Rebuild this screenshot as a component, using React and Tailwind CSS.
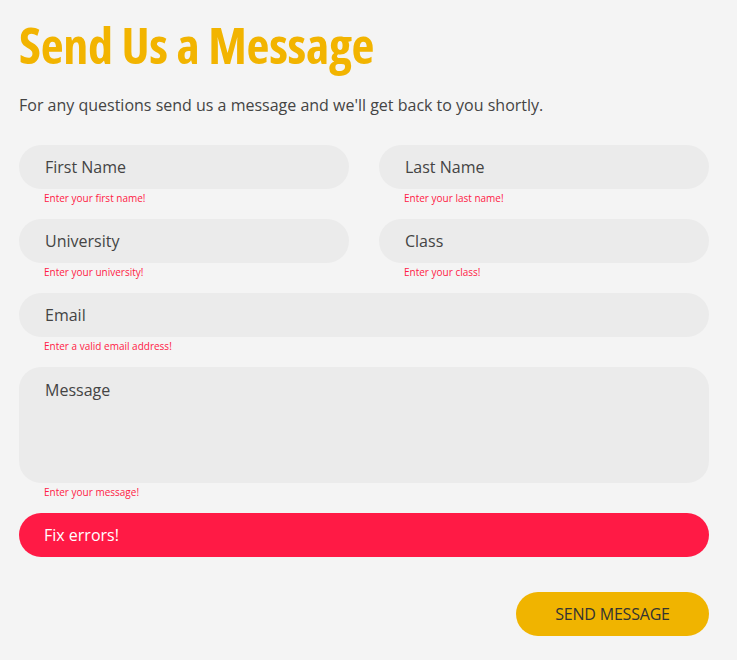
export default function App() {
    const inputCls = "w-full h-[44px] rounded-full bg-[#ebebeb] pl-[26px] text-[16px] text-[#444] placeholder:text-[#444] outline-none"
    const errCls = "pl-[25px] pt-[3px] h-[30px] text-[10px] leading-[13px] text-[#ff1a45]"

    return (
        <div className="min-h-screen bg-[#f4f4f4] px-[19px] pt-[15px] pb-[24px]" style={{ fontFamily: '"Open Sans", sans-serif' }}>
            <div className="w-[690px]">
                <h1 className="text-[50px] leading-[60px] font-bold text-[#f2b400] tracking-[-0.25px]" style={{ fontStretch: '75%' }}>
                    Send Us a Message
                </h1>
                <p className="mt-[19px] text-[16px] leading-[22px] text-[#444]">
                    For any questions send us a message and we'll get back to you shortly.
                </p>

                <form className="mt-[29px]">
                    <div className="grid grid-cols-2 gap-x-[30px]">
                        <div>
                            <input className={inputCls} placeholder="First Name" />
                            <div className={errCls}>Enter your first name!</div>
                        </div>
                        <div>
                            <input className={inputCls} placeholder="Last Name" />
                            <div className={errCls}>Enter your last name!</div>
                        </div>
                        <div>
                            <input className={inputCls} placeholder="University" />
                            <div className={errCls}>Enter your university!</div>
                        </div>
                        <div>
                            <input className={inputCls} placeholder="Class" />
                            <div className={errCls}>Enter your class!</div>
                        </div>
                    </div>
                    <div>
                        <input className={inputCls} placeholder="Email" />
                        <div className={errCls}>Enter a valid email address!</div>
                    </div>
                    <div>
                        <textarea className="block w-full h-[116px] resize-none rounded-[22px] bg-[#ebebeb] pl-[26px] pt-[11px] text-[16px] text-[#444] placeholder:text-[#444] outline-none" placeholder="Message" />
                        <div className={errCls}>Enter your message!</div>
                    </div>
                    <div className="h-[44px] rounded-full bg-[#ff1a45] pl-[25px] flex items-center text-[16px] text-white">
                        Fix errors!
                    </div>
                    <div className="mt-[35px] flex justify-end">
                        <button type="button" className="w-[193px] h-[44px] rounded-full bg-[#f0b400] text-[16px] text-[#333] uppercase tracking-[-0.2px]">
                            Send Message
                        </button>
                    </div>
                </form>
            </div>
        </div>
    )
}
